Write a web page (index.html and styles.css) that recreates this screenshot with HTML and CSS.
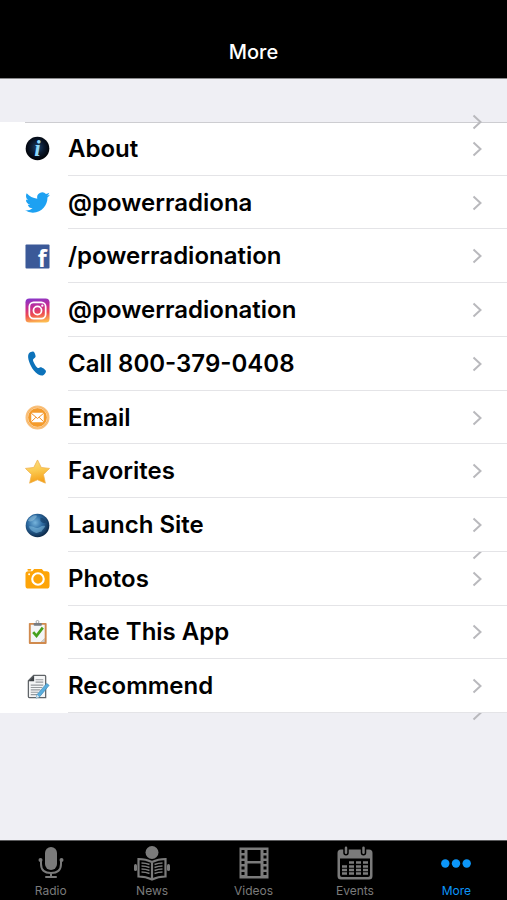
FILE: index.html
```
<!DOCTYPE html>
<html lang="en">
<head>
    <meta charset="UTF-8">
    <meta name="viewport" content="width=device-width, initial-scale=1.0">
    <title>More</title>
    <link rel="stylesheet" href="styles.css">
</head>
<body>
    <!-- Chevron shared by all rows -->
    <svg class="defs" aria-hidden="true">
        <symbol id="chevron" viewBox="0 0 10 16">
            <path d="M1.5 1.5L8.5 8L1.5 14.5" fill="none" stroke="#b9b9bd" stroke-width="2"/>
        </symbol>
    </svg>

    <header class="navbar">
        <h1>More</h1>
    </header>

    <main>
        <ul class="menu">
            <li>
                <a href="#about">
                    <svg class="icon" viewBox="0 0 26 26">
                        <defs>
                            <radialGradient id="infoBg" cy="0.45">
                                <stop offset="0" stop-color="#1d4670"/>
                                <stop offset="0.55" stop-color="#0b1a30"/>
                                <stop offset="1" stop-color="#02050b"/>
                            </radialGradient>
                        </defs>
                        <circle cx="13" cy="13" r="12.3" fill="url(#infoBg)"/>
                        <text x="13" y="21" class="info-letter">i</text>
                    </svg>
                    <span class="label">About</span>
                    <svg class="chevron"><use href="#chevron"/></svg>
                </a>
                <svg class="chevron ghost-full"><use href="#chevron"/></svg>
            </li>
            <li>
                <a href="#twitter">
                    <svg class="icon" viewBox="0 0 24 24">
                        <path fill="#1da1f2" d="M23.95 4.57a10 10 0 0 1-2.82.77 4.96 4.96 0 0 0 2.16-2.72c-.95.55-2 .95-3.13 1.18a4.92 4.92 0 0 0-8.38 4.48C7.69 8.1 4.07 6.13 1.64 3.16a4.82 4.82 0 0 0-.67 2.48c0 1.71.87 3.21 2.19 4.1a4.9 4.9 0 0 1-2.23-.62v.06a4.92 4.92 0 0 0 3.95 4.83 5 5 0 0 1-2.21.08 4.94 4.94 0 0 0 4.6 3.42A9.87 9.87 0 0 1 0 19.54a13.99 13.99 0 0 0 7.56 2.21c9.05 0 14-7.5 14-13.98 0-.21 0-.42-.02-.63a9.94 9.94 0 0 0 2.41-2.57z"/>
                    </svg>
                    <span class="label">@powerradiona</span>
                    <svg class="chevron"><use href="#chevron"/></svg>
                </a>
            </li>
            <li>
                <a href="#facebook">
                    <svg class="icon" viewBox="0 0 26 26">
                        <rect x="0.5" y="0.5" width="25" height="25" rx="1" fill="#3b5998"/>
                        <text x="18" y="24" class="fb-letter">f</text>
                    </svg>
                    <span class="label">/powerradionation</span>
                    <svg class="chevron"><use href="#chevron"/></svg>
                </a>
            </li>
            <li>
                <a href="#instagram">
                    <svg class="icon" viewBox="0 0 26 26">
                        <defs>
                            <linearGradient id="instaBg" x1="0.35" y1="0" x2="0.5" y2="1">
                                <stop offset="0" stop-color="#8a35c8"/>
                                <stop offset="0.35" stop-color="#c62d94"/>
                                <stop offset="0.65" stop-color="#ee4a50"/>
                                <stop offset="1" stop-color="#fdbb50"/>
                            </linearGradient>
                        </defs>
                        <rect x="0.5" y="0.5" width="25" height="25" rx="4" fill="url(#instaBg)"/>
                        <g fill="none" stroke="#fff" stroke-width="1.8">
                            <rect x="4.5" y="4.5" width="17" height="17" rx="4.5"/>
                            <circle cx="13" cy="13" r="4.2"/>
                        </g>
                        <circle cx="18" cy="8" r="1.2" fill="#fff"/>
                    </svg>
                    <span class="label">@powerradionation</span>
                    <svg class="chevron"><use href="#chevron"/></svg>
                </a>
            </li>
            <li>
                <a href="tel:8003790408">
                    <svg class="icon" viewBox="0 0 26 26">
                        <path fill="#0c72ba" d="M4 2.5C5.500 1 8 .2 9 .8c1 .6 2.200 3.800 2 5.200-.2 1.300-2.500 2-2.700 3.200-.2 1.600 2.800 7 4.600 8.300 1.200.8 2.600-1 3.900-.5 1.600.5 4.700 2.700 5 3.900.3 1.500-1.700 4-3.300 4.500-2.200.6-6.500-1.400-9.500-5.400C5.500 15.500 1.500 6 4 2.500z"/>
                    </svg>
                    <span class="label">Call 800-379-0408</span>
                    <svg class="chevron"><use href="#chevron"/></svg>
                </a>
            </li>
            <li>
                <a href="#email">
                    <svg class="icon" viewBox="0 0 26 26">
                        <circle cx="13" cy="13" r="11.700" fill="#f49b2c" stroke="#f9c07c" stroke-width="1.600"/>
                        <circle cx="13" cy="13" r="10.200" fill="none" stroke="#fbd9ae" stroke-width="1"/>
                        <rect x="6.500" y="8" width="13" height="10" rx="1" fill="#fff"/>
                        <path d="M6.500 8.500L13 14l6.500-5.500M6.500 17.500l4.800-4.700M19.500 17.500l-4.800-4.700" fill="none" stroke="#f08a1c" stroke-width="1"/>
                    </svg>
                    <span class="label">Email</span>
                    <svg class="chevron"><use href="#chevron"/></svg>
                </a>
            </li>
            <li>
                <a href="#favorites">
                    <svg class="icon" viewBox="0 0 26 26">
                        <defs>
                            <linearGradient id="starBg" x1="0" y1="0" x2="0.2" y2="1">
                                <stop offset="0" stop-color="#fbe08a"/>
                                <stop offset="0.5" stop-color="#fbcb52"/>
                                <stop offset="1" stop-color="#f5a21c"/>
                            </linearGradient>
                        </defs>
                        <path d="M13 1l3.900 7.800 8.600 1-6.300 6.200 2 9.100-8.200-3.500-8.200 3.500 2-9.100L.5 9.800l8.600-1z" fill="url(#starBg)" stroke="#efb04a" stroke-width="0.8" stroke-linejoin="round"/>
                    </svg>
                    <span class="label">Favorites</span>
                    <svg class="chevron"><use href="#chevron"/></svg>
                </a>
            </li>
            <li>
                <a href="#site">
                    <svg class="icon" viewBox="0 0 26 26">
                        <defs>
                            <radialGradient id="globeBg" cx="0.4" cy="0.38" r="0.62">
                                <stop offset="0" stop-color="#76b4dc"/>
                                <stop offset="0.5" stop-color="#2d6ba2"/>
                                <stop offset="1" stop-color="#0d2b4c"/>
                            </radialGradient>
                        </defs>
                        <circle cx="13" cy="13" r="12.300" fill="url(#globeBg)"/>
                        <path d="M3 8c2-4 6-6 9-5.500 1 1.500-1 2.500-2 4-1.500 2-5 3-7 1.500z" fill="#9cc9e2" opacity="0.5"/>
                        <path d="M4 14c4-1 6 2 9 1.500s4-3 8-2c-1 3-3 3.500-4 6-3-.5-4 2-6 1-3-1-6-3-7-6.500z" fill="#8cc8e8" opacity="0.5"/>
                        <path d="M16 5c3 0 5 2 6 5-2 1-5 0-6-2z" fill="#123a63" opacity="0.6"/>
                    </svg>
                    <span class="label">Launch Site</span>
                    <svg class="chevron"><use href="#chevron"/></svg>
                </a>
            </li>
            <li>
                <a href="#photos">
                    <svg class="icon" viewBox="0 0 26 26">
                        <path d="M3.500 5.500h4L9.500 3h8l2 2.500h3a3 3 0 0 1 3 3v12a3 3 0 0 1-3 3h-19a3 3 0 0 1-3-3v-12a3 3 0 0 1 3-3z" fill="#fda408"/>
                        <rect x="2.500" y="3" width="4" height="2" rx="1" fill="#fda408"/>
                        <circle cx="13.500" cy="13.500" r="6" fill="none" stroke="#fff" stroke-width="2.200"/>
                        <circle cx="4.300" cy="8.500" r="1" fill="#fff"/>
                    </svg>
                    <span class="label">Photos</span>
                    <svg class="chevron"><use href="#chevron"/></svg>
                </a>
                <svg class="chevron ghost-half"><use href="#chevron"/></svg>
            </li>
            <li>
                <a href="#rate">
                    <svg class="icon" viewBox="0 0 26 26">
                        <rect x="4" y="3" width="18.500" height="22" rx="1" fill="#d08a4e"/>
                        <path d="M6 5h14.500v14l-4 4H6z" fill="#f3f5f7"/>
                        <path d="M20.500 19v4h-4z" fill="#c9ced2"/>
                        <circle cx="13" cy="2" r="1.500" fill="none" stroke="#a3a6a9"/>
                        <rect x="9" y="3" width="8.500" height="3" rx="1" fill="#777b80"/>
                        <path d="M8.500 12.500l3.500 4L18.500 8" fill="none" stroke="#45a01c" stroke-width="2.800"/>
                    </svg>
                    <span class="label">Rate This App</span>
                    <svg class="chevron"><use href="#chevron"/></svg>
                </a>
            </li>
            <li>
                <a href="#recommend">
                    <svg class="icon" viewBox="0 0 26 26">
                        <path d="M9 1.500h11.500q1 0 1 1v22H4.500q-1 0-1-1V7z" fill="#f4f5f6" stroke="#606468" stroke-width="1.300"/>
                        <path d="M9.500 1.500v6h-6z" fill="#3e4246"/>
                        <path d="M11 6h8M11 8.500h8M6 11.500h13M6 14h12M6 16.500h10M6 19h8M6 21.500h7" stroke="#969a9e" stroke-width="1.200"/>
                        <path d="M22.500 9.800l2.600 2-10 12-3.600 1.200 1-3.500z" fill="#5aaede" stroke="#3988b8" stroke-width="0.700"/>
                        <path d="M12.500 21.500l2.600 2.300-3.600 1.200z" fill="#e2e6e8"/>
                    </svg>
                    <span class="label">Recommend</span>
                    <svg class="chevron"><use href="#chevron"/></svg>
                </a>
            </li>
        </ul>
        <div class="list-end">
            <svg class="chevron ghost-half"><use href="#chevron"/></svg>
        </div>
    </main>

    <nav class="tabbar">
        <a href="#radio">
            <svg viewBox="0 0 36 36">
                <rect x="12" y="2" width="12" height="23" rx="6"/>
                <path d="M8 14.500V19c0 6 4 9 10 9s10-3 10-9v-4.500M18 28v4.500" fill="none" stroke="currentColor" stroke-width="2"/>
                <circle cx="7.500" cy="15" r="2"/>
                <circle cx="28.500" cy="15" r="2"/>
                <rect x="12" y="31" width="12" height="2" rx="1"/>
            </svg>
            <span>Radio</span>
        </a>
        <a href="#news">
            <svg viewBox="0 0 36 36">
                <circle cx="18" cy="7.500" r="6.500"/>
                <rect x="0" y="19" width="3" height="7" rx="1.500"/>
                <rect x="33" y="19" width="3" height="7" rx="1.500"/>
                <path d="M4.500 14c5 0 9 .8 13.500 3 4.500-2.200 8.500-3 13.500-3v17.500c-5 0-9 .8-13.500 3-4.500-2.200-8.500-3-13.500-3zM18 17v17" fill="none" stroke="currentColor" stroke-width="2.200"/>
                <path d="M7.500 18c3 0 5.500.5 8 1.500M7.500 21c3 0 5.500.5 8 1.500M7.500 24c3 0 5.500.5 8 1.500M7.500 27c3 0 5.500.5 8 1.500M20.500 19.500c2.500-1 5-1.500 8-1.500M20.500 22.500c2.500-1 5-1.500 8-1.500M20.500 25.500c2.500-1 5-1.500 8-1.500M20.500 28.500c2.500-1 5-1.500 8-1.500" fill="none" stroke="currentColor" stroke-width="1.600"/>
            </svg>
            <span>News</span>
        </a>
        <a href="#videos">
            <svg viewBox="0 0 36 36">
                <path fill-rule="evenodd" d="M3.500 2.500h29v31h-29zM11.500 5v11h13V5zM11.500 18.500V31h13V18.500zM5.500 5v3h3V5zM5.500 10.500v3h3v-3zM5.500 16v3h3v-3zM5.500 21.500v3h3v-3zM5.500 27v3h3v-3zM27.500 5v3h3V5zM27.500 10.500v3h3v-3zM27.500 16v3h3v-3zM27.500 21.500v3h3v-3zM27.500 27v3h3v-3z"/>
            </svg>
            <span>Videos</span>
        </a>
        <a href="#events">
            <svg viewBox="0 0 36 36">
                <path fill-rule="evenodd" d="M4 4.500h28a3.500 3.500 0 0 1 3.500 3.500v23a3.500 3.500 0 0 1-3.500 3.500H4A3.500 3.500 0 0 1 .5 31V8A3.500 3.500 0 0 1 4 4.500zM3 13.500V30a2 2 0 0 0 2 2h26a2 2 0 0 0 2-2V13.500z"/>
                <g stroke="#000" stroke-width="1.500">
                    <rect x="7" y="0.800" width="4" height="9" rx="2"/>
                    <rect x="24.500" y="0.800" width="4" height="9" rx="2"/>
                </g>
                <path d="M12 17.500h5M19 17.500h5M26 17.500h5M5 21.500h5M12 21.500h5M19 21.500h5M26 21.500h5M5 25h5M12 25h5M19 25h5M26 25h5M5 28.500h5M12 28.500h5M19 28.500h5M26 28.500h5" stroke="currentColor" stroke-width="2.400"/>
            </svg>
            <span>Events</span>
        </a>
        <a href="#more" class="active">
            <svg viewBox="0 0 36 36">
                <circle cx="7.300" cy="18.500" r="4.200"/>
                <circle cx="18" cy="18.500" r="4.200"/>
                <circle cx="28.700" cy="18.500" r="4.200"/>
            </svg>
            <span>More</span>
        </a>
    </nav>
</body>
</html>
```
FILE: styles.css
```
/* Reset CSS */
* {
    margin: 0;
    padding: 0;
    box-sizing: border-box;
}

/* Basic styling */
body {
    display: flex;
    flex-direction: column;
    min-height: 100vh;
    font-family: Inter, "Liberation Sans", sans-serif;
    background-color: #efeff4;
    color: #000;
}

a {
    color: inherit;
    text-decoration: none;
}

.defs {
    position: absolute;
    width: 0;
    height: 0;
}

.navbar {
    padding: 40px 16px 14px;
    background-color: #000;
    border-bottom: 1px solid #8a8a8c;
    color: #fff;
    text-align: center;
}

.navbar h1 {
    font-size: 20px;
    font-weight: 500;
    line-height: 24px;
}

main {
    flex: 1;
    display: flex;
    flex-direction: column;
    padding-top: 43px;
}

/* Menu rows share the free height */
.menu {
    flex: 1;
    display: flex;
    flex-direction: column;
    list-style: none;
    background-color: #fff;
}

.menu li {
    flex: 1;
    display: flex;
    position: relative;
    min-height: 44px;
}

.menu a {
    flex: 1;
    display: flex;
    align-items: center;
    padding: 0 25px;
}

/* Separator starts at the label, the first one at the icon */
.menu li::after,
.menu li:first-child::before {
    content: "";
    position: absolute;
    right: 0;
    bottom: 0;
    left: 68px;
    height: 1px;
    background-color: #e4e4e7;
}

.menu li:first-child::before {
    top: 0;
    left: 25px;
    background-color: #cdcdd1;
}

.icon {
    width: 25px;
    height: 25px;
    margin-right: 18px;
    overflow: visible;
}

.label {
    flex: 1;
    font-size: 24px;
    font-weight: 600;
    line-height: 30px;
}

.info-letter {
    fill: #8fd8fa;
    font: italic bold 24px "Liberation Serif", serif;
    text-anchor: middle;
}

.fb-letter {
    fill: #fff;
    font: bold 24px "Open Sans", sans-serif;
    text-anchor: middle;
}

.chevron {
    width: 10px;
    height: 16px;
}

.ghost-full,
.ghost-half {
    position: absolute;
    top: -8px;
    right: 25px;
}

.ghost-half {
    clip-path: inset(8px 0 0 0);
}

.list-end {
    position: relative;
    height: 127px;
}

/* Tab bar */
.tabbar {
    display: flex;
    background-color: #000;
    border-top: 1px solid #5a5a5c;
    color: #7b7b7b;
}

.tabbar a {
    flex: 1;
    display: flex;
    flex-direction: column;
    align-items: center;
    gap: 2px;
    padding: 4px 0 1px;
    font-size: 12px;
    line-height: 16px;
}

.tabbar svg {
    width: 36px;
    height: 36px;
    fill: currentColor;
}

.tabbar .active {
    color: #0c96f8;
}
```
